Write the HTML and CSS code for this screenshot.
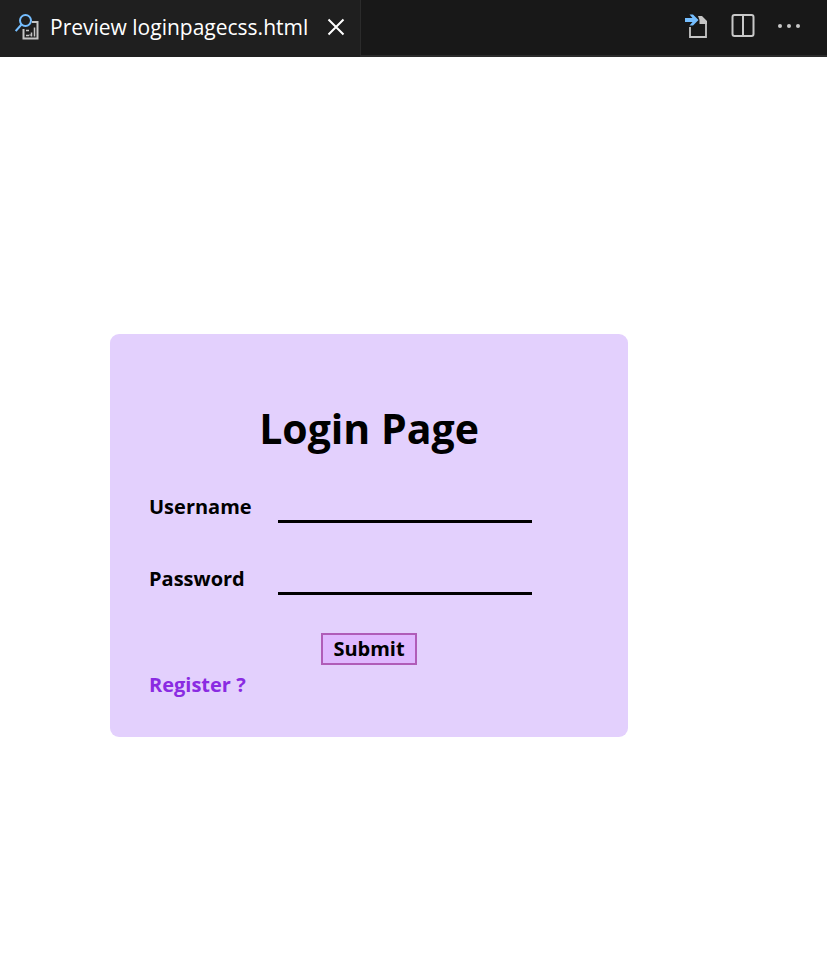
FILE: index.html
```html
<!DOCTYPE html>
<html lang="en">
<head>
<meta charset="utf-8">
<title>Preview loginpagecss.html</title>
<link rel="stylesheet" href="styles.css">
</head>
<body>
<header class="tabbar">
  <div class="tab">
    <svg class="icon" width="25" height="28" viewBox="0 0 25 28" fill="none" aria-hidden="true">
      <path d="M17 9H22.500V25.500H8.500V16" stroke="#c5c5c5" stroke-width="2"/>
      <path d="M11 17.500h3M11 22.500h3M16.500 23.500v-4M19.500 23.500v-9M14.500 22h1" stroke="#c5c5c5" stroke-width="1.500"/>
      <circle cx="10.500" cy="7.500" r="5.500" stroke="#75beff" stroke-width="2"/>
      <path d="M6.500 11.500L.7 18" stroke="#75beff" stroke-width="2"/>
    </svg>
    <span class="tab-title">Preview loginpagecss.html</span>
    <button class="icon-button" type="button" aria-label="Close">
      <svg width="18" height="18" viewBox="0 0 18 18" aria-hidden="true"><path d="M1.500 1.500l15 15M16.500 1.500l-15 15" stroke="#fff" stroke-width="2"/></svg>
    </button>
  </div>
  <div class="actions">
    <button class="icon-button" type="button" aria-label="Show source">
      <svg width="24" height="26" viewBox="0 0 24 26" fill="none" aria-hidden="true">
        <path d="M5 14v10h16V10" stroke="#c5c5c5" stroke-width="1.800"/>
        <path d="M13 3h4l5 5v3h-7.500V7z" fill="#c5c5c5"/>
        <path d="M0 5h7.500L4.500 1.500h3.500L13.500 7 8 12.500H4.500L7.500 9H0z" fill="#75beff"/>
      </svg>
    </button>
    <button class="icon-button" type="button" aria-label="Split editor">
      <svg width="24" height="24" viewBox="0 0 24 24" fill="none" stroke="#c8c8c8" stroke-width="2" aria-hidden="true"><rect x="1.500" y="1" width="21" height="21" rx="2"/><path d="M12 1v21"/></svg>
    </button>
    <button class="icon-button" type="button" aria-label="More actions">
      <svg width="24" height="24" viewBox="0 0 24 24" fill="#c8c8c8" aria-hidden="true"><circle cx="3" cy="12" r="2"/><circle cx="12" cy="12" r="2"/><circle cx="21" cy="12" r="2"/></svg>
    </button>
  </div>
</header>
<main class="preview">
  <form class="card">
    <h1 class="title">Login Page</h1>
    <div class="fields">
      <div class="field">
        <label for="username">Username</label>
        <input id="username" type="text">
      </div>
      <div class="field">
        <label for="password">Password</label>
        <input id="password" type="password">
      </div>
    </div>
    <button class="submit" type="button">Submit</button>
    <a class="register" href="#">Register ?</a>
  </form>
</main>
</body>
</html>
```
FILE: styles.css
```css
* {
  box-sizing: border-box;
}

body {
  margin: 0;
  background: #fff;
  color: #000;
  font-family: "Open Sans", sans-serif;
}

.tabbar {
  display: flex;
  justify-content: space-between;
  height: 57px;
  background: #181818;
  border-bottom: 2px solid #2b2b2b;
}

.tab {
  display: flex;
  align-items: center;
  height: 57px;
  padding: 0 15px 4px;
  background: #1f1f1f;
  border-right: 1px solid #2b2b2b;
}

.tab-title {
  margin: 0 19px 0 10px;
  color: #fff;
  font-size: 21px;
  line-height: 28px;
  white-space: nowrap;
}

.icon-button {
  display: flex;
  padding: 0;
  border: 0;
  background: none;
}

.actions {
  display: flex;
  align-items: center;
  gap: 22px;
  padding: 0 26px 4px 0;
}

.preview {
  padding: 277px 0 0 110px;
}

.card {
  display: flex;
  flex-direction: column;
  max-width: 518px;
  padding: 72px 39px 40px;
  border-radius: 9px;
  background: #e3d0fd;
  font-size: 20px;
  font-weight: bold;
}

.title {
  margin: 0 0 43px;
  font-size: 41px;
  line-height: 44px;
  text-align: center;
}

.fields {
  display: flex;
  flex-direction: column;
  gap: 40px;
  margin-bottom: 36px;
}

.field {
  display: flex;
  height: 32px;
}

.field label {
  width: 129px;
  line-height: 28px;
}

.field input {
  flex: 0 1 254px;
  min-width: 0;
  margin-top: 2px;
  height: 28px;
  padding: 0;
  border: 0;
  border-bottom: 3px solid #000;
  background: transparent;
  font: inherit;
  outline: 0;
}

.submit {
  align-self: center;
  height: 32px;
  margin-bottom: 8px;
  padding: 0 10px;
  border: 2px solid #b05cb8;
  background: #dfb8ff;
  color: #000;
  font: inherit;
  line-height: 24px;
}

.register {
  align-self: flex-start;
  color: #8a2be2;
  line-height: 24px;
  text-decoration: none;
}
```
